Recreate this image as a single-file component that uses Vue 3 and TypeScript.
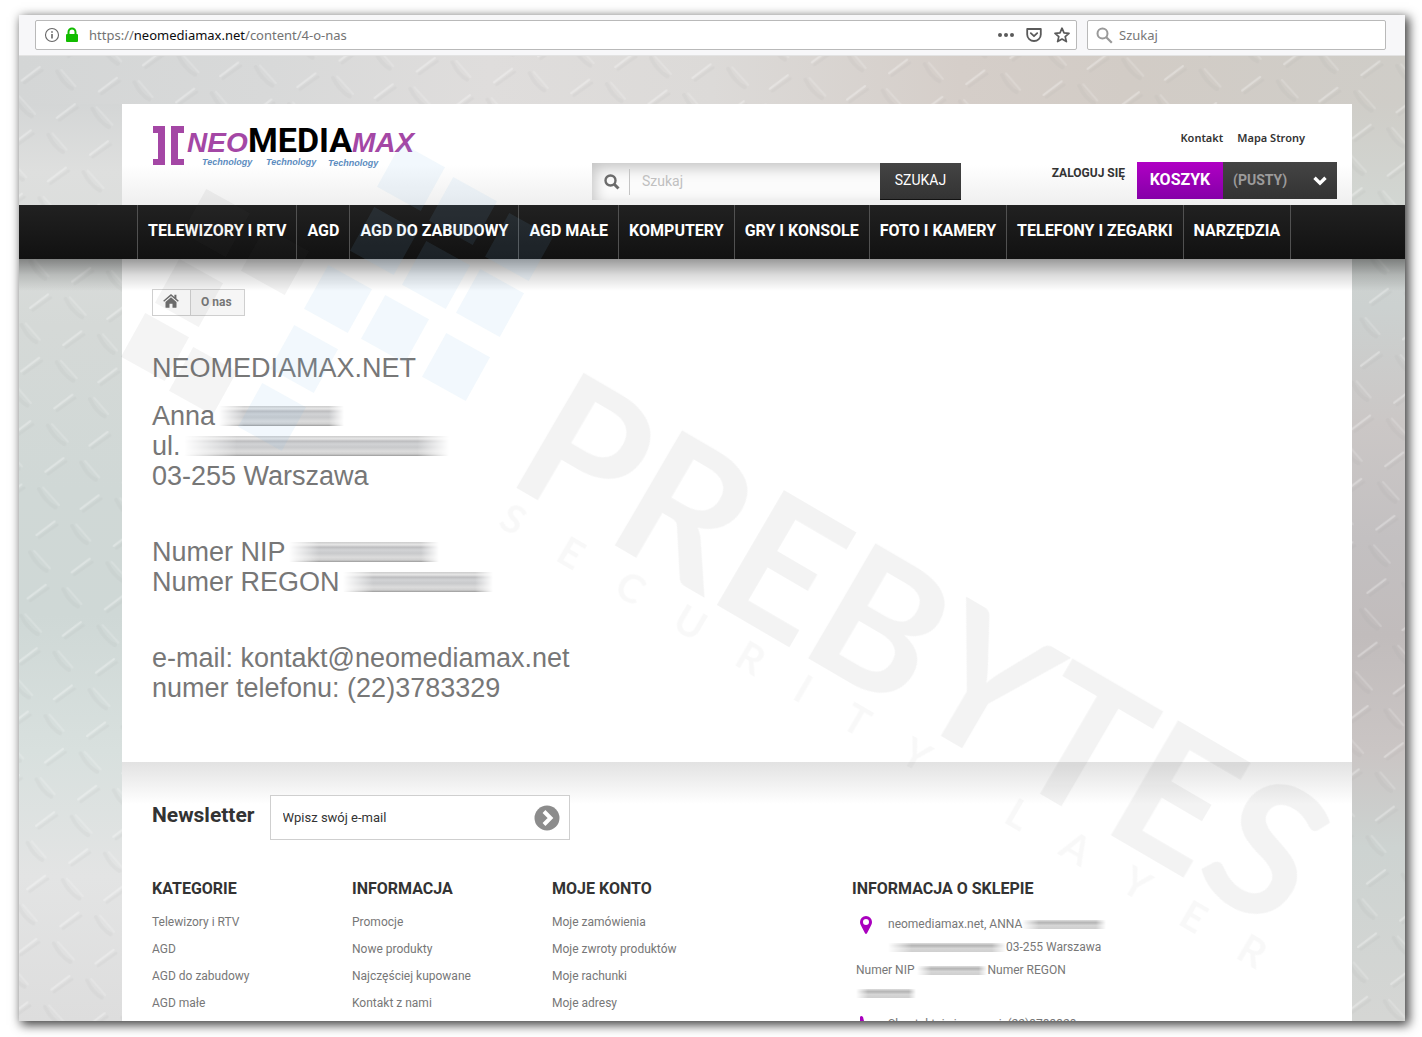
<script setup lang="ts">
interface LinkColumn {
  title: string
  links: string[]
}

const menu: string[] = [
  'TELEWIZORY I RTV',
  'AGD',
  'AGD DO ZABUDOWY',
  'AGD MAŁE',
  'KOMPUTERY',
  'GRY I KONSOLE',
  'FOTO I KAMERY',
  'TELEFONY I ZEGARKI',
  'NARZĘDZIA',
]

const columns: LinkColumn[] = [
  { title: 'KATEGORIE', links: ['Telewizory i RTV', 'AGD', 'AGD do zabudowy', 'AGD małe'] },
  { title: 'INFORMACJA', links: ['Promocje', 'Nowe produkty', 'Najczęściej kupowane', 'Kontakt z nami'] },
  { title: 'MOJE KONTO', links: ['Moje zamówienia', 'Moje zwroty produktów', 'Moje rachunki', 'Moje adresy'] },
]

// Centres of the tilted tiles in the watermark emblem
const blueTiles: [number, number][] = [
  [392, 162], [444, 196], [365, 226], [417, 260], [500, 232],
  [319, 284], [376, 314], [471, 288], [437, 352], [285, 344], [253, 402],
]
const greyTiles: [number, number][] = [
  [197, 208], [170, 278], [256, 246], [136, 332], [184, 366],
]
</script>

<template>
  <div class="desk">
    <div class="window">
      <div class="toolbar">
        <div class="address">
          <svg width="16" height="16" viewBox="0 0 16 16" aria-hidden="true">
            <circle cx="8" cy="8" r="6.5" fill="none" stroke="#666" stroke-width="1.1" />
            <path d="M7.2 7h1.6v4.6H7.2zM7.2 4.2h1.6v1.6H7.2z" fill="#666" />
          </svg>
          <svg class="lock" width="14" height="16" viewBox="0 0 14 16" aria-hidden="true">
            <path d="M3.5 8V5a3.5 3.5 0 0 1 7 0v3" fill="none" stroke="#12bc00" stroke-width="2" />
            <rect x="1" y="7" width="12" height="8" rx="1" fill="#12bc00" />
          </svg>
          <span class="url">https://<b>neomediamax.net</b>/content/4-o-nas</span>
          <span class="actions">
            <svg width="16" height="16" viewBox="0 0 16 16" fill="#5a5a5a" aria-hidden="true">
              <circle cx="2" cy="8" r="2" /><circle cx="8" cy="8" r="2" /><circle cx="14" cy="8" r="2" />
            </svg>
            <svg width="16" height="16" viewBox="0 0 16 16" fill="none" stroke="#5a5a5a" stroke-width="1.8" stroke-linecap="round" stroke-linejoin="round" aria-hidden="true">
              <path d="M1.2 2h13.6v5.4a6.8 6.6 0 0 1-13.6 0z" /><path d="M4.8 6.2 8 9.2l3.200-3" />
            </svg>
            <svg width="16" height="16" viewBox="0 0 16 16" fill="none" stroke="#5a5a5a" stroke-width="1.7" stroke-linejoin="round" aria-hidden="true">
              <path d="m8 1.200 2 4.600 5 .5-3.800 3.300 1.200 5L8 12l-4.400 2.600 1.200-5L1 6.300l5-.5z" />
            </svg>
          </span>
        </div>
        <label class="finder">
          <svg width="17" height="17" viewBox="0 0 17 17" fill="none" stroke="#999" aria-hidden="true">
            <circle cx="6.500" cy="6.500" r="5" stroke-width="2" /><path d="m10.300 10.300 5.500 5.500" stroke-width="2.200" />
          </svg>
          <input type="search" placeholder="Szukaj" aria-label="Szukaj w sieci" />
        </label>
      </div>

      <div class="site">
        <svg class="texture" width="100%" height="100%" aria-hidden="true">
          <defs>
            <pattern id="tread" width="78" height="64" patternUnits="userSpaceOnUse" patternTransform="rotate(8)">
              <g fill="none" stroke-linecap="round">
                <path d="M6 24 22 8M46 56 62 40" stroke="#fff" stroke-width="2" opacity=".3" />
                <path d="M9 26 25 11M49 58 65 43" stroke="#8b908e" stroke-width="3" opacity=".07" />
                <path d="M44 8 60 22M6 40 24 55" stroke="#fff" stroke-width="2" opacity=".17" />
                <path d="M40 10q8 12 17 15M2 42q8 12 19 16" stroke="#8b908e" stroke-width="4" opacity=".07" />
              </g>
            </pattern>
          </defs>
          <rect width="100%" height="100%" fill="url(#tread)" />
        </svg>

        <header class="sheet header">
          <a class="logo" href="#" aria-label="NeoMediaMax">
            <svg width="270" height="54" viewBox="0 0 270 54">
              <path d="M1 9h12v39H1v-6h5V16H1zM19 9h13v7h-6v26h6v6H19z" fill="#a447a5" />
              <g class="brand">
                <text x="35" y="35" class="slant">NEO</text>
                <text x="96" y="35" class="block">MEDIA</text>
                <text x="200" y="35" class="slant">MAX</text>
              </g>
              <g class="tag">
                <text x="50" y="48">Technology</text>
                <text x="114" y="48">Technology</text>
                <text x="176" y="49">Technology</text>
              </g>
            </svg>
          </a>
          <form class="search" @submit.prevent>
            <svg width="16" height="16" viewBox="0 0 16 16" fill="none" stroke="#6b6b6b" aria-hidden="true">
              <circle cx="6.500" cy="6.500" r="5" stroke-width="2.400" /><path d="m10.500 10.500 4 4" stroke-width="3" />
            </svg>
            <input type="text" placeholder="Szukaj" aria-label="Szukaj w sklepie" />
            <button type="submit">SZUKAJ</button>
          </form>
          <div class="account">
            <div class="toplinks"><a href="#">Kontakt</a><a href="#">Mapa Strony</a></div>
            <div class="userbar">
              <a class="login" href="#">ZALOGUJ SIĘ</a>
              <a class="cart" href="#">
                <span class="cart-name">KOSZYK</span>
                <span class="cart-state">(PUSTY)
                  <svg width="14" height="10" viewBox="0 0 14 10" fill="none" stroke="#fff" stroke-width="3.400" aria-hidden="true"><path d="m1.500 1.800 5.500 5.400 5.500-5.400" /></svg>
                </span>
              </a>
            </div>
          </div>
        </header>

        <nav class="menu">
          <a v-for="item in menu" :key="item" href="#">{{ item }}</a>
        </nav>

        <main class="sheet content">
          <div class="crumbs">
            <a href="#" aria-label="Strona główna">
              <svg width="16" height="14" viewBox="0 0 16 14" fill="#6d6d6d" aria-hidden="true">
                <path d="M8 3.200 13.500 8v5.200a.6.600 0 0 1-.6.600H9.500V9.800h-3v4H3.100a.6.600 0 0 1-.6-.6V8z" />
                <path d="M8 0 .2 6.700l.9 1L8 1.900l6.900 5.800.9-1L13.400 4.600V.8h-2v2.100z" />
              </svg>
            </a>
            <span>O nas</span>
          </div>
          <div class="about">
            <p>NEOMEDIAMAX.NET</p>
            <p>Anna <i class="hidden w125"></i><br />ul. <i class="hidden w265"></i><br />03-255 Warszawa</p>
            <p>Numer NIP <i class="hidden w150"></i><br />Numer REGON <i class="hidden w150"></i></p>
            <p>e-mail: kontakt@neomediamax.net<br />numer telefonu: (22)3783329</p>
          </div>
        </main>

        <footer class="sheet footer">
          <form class="newsletter" @submit.prevent>
            <label for="newsletter">Newsletter</label>
            <div class="mailbox">
              <input id="newsletter" type="text" value="Wpisz swój e-mail" />
              <button type="submit" aria-label="Zapisz się">
                <svg width="26" height="26" viewBox="0 0 26 26" aria-hidden="true">
                  <circle cx="13" cy="13" r="12.500" fill="#8c8c8c" />
                  <path d="m10 6.500 6.500 6.500-6.500 6.500" fill="none" stroke="#fff" stroke-width="4" />
                </svg>
              </button>
            </div>
          </form>
          <div class="columns">
            <section v-for="column in columns" :key="column.title">
              <h4>{{ column.title }}</h4>
              <ul>
                <li v-for="link in column.links" :key="link"><a href="#">{{ link }}</a></li>
              </ul>
            </section>
            <section class="store">
              <h4>INFORMACJA O SKLEPIE</h4>
              <div class="entry">
                <svg width="12" height="18" viewBox="0 0 12 18" aria-hidden="true">
                  <path fill-rule="evenodd" d="M6 0a6 6 0 0 1 6 6c0 2-1 3.500-2 5.500L7 17.200q-1 1.400-2 0L2 11.500C1 9.500 0 8 0 6a6 6 0 0 1 6-6zm0 3a3 3 0 1 0 0 6 3 3 0 0 0 0-6z" fill="#a900be" />
                </svg>
                <span>neomediamax.net, ANNA<i class="hidden small w84"></i><br /><i class="hidden small w118"></i>03-255 Warszawa</span>
              </div>
              <p>Numer NIP <i class="hidden small w70"></i>Numer REGON<br /><i class="hidden small w60"></i></p>
              <div class="entry">
                <svg width="12" height="18" viewBox="0 0 12 18" aria-hidden="true">
                  <path d="M0 1q1-2 3 0l1 4-2 2q2 4 5 6l2-1 2 2q1 2-1 3-4 1-8-5T0 1z" fill="#a900be" />
                </svg>
                <span>Skontaktuj się z nami: (22)3783329</span>
              </div>
            </section>
          </div>
        </footer>
      </div>

      <svg class="watermark" viewBox="0 0 1386 1006" preserveAspectRatio="xMinYMin meet" aria-hidden="true">
        <g fill="#7fbbe4" opacity=".1">
          <rect v-for="([x, y], i) in blueTiles" :key="i" x="-25" y="-25" width="50" height="50" :transform="`translate(${x} ${y}) rotate(29)`" />
        </g>
        <g fill="#555" opacity=".065">
          <rect v-for="([x, y], i) in greyTiles" :key="i" x="-25" y="-25" width="50" height="50" :transform="`translate(${x} ${y}) rotate(29)`" />
        </g>
        <g fill="#555" opacity=".068" transform="translate(498 472) rotate(30.300)">
          <text class="mark-big" x="-15" y="1">PREBYTES</text>
          <text class="mark-small" x="13 80 149 218 288 349 411 480 598 665 735 801 869" y="44">SECURITYLAYER</text>
        </g>
      </svg>
    </div>
  </div>
</template>

<style>
body {
  margin: 0;
  background: #fff;
}
</style>

<style scoped>
* {
  box-sizing: border-box;
}
.desk {
  height: 100vh;
  padding: 15px 17px 16px 19px;
  overflow: hidden;
  font-family: Roboto, "Liberation Sans", sans-serif;
  font-size: 12px;
  color: #777;
}
a {
  color: inherit;
  text-decoration: none;
}
.window {
  position: relative;
  display: flex;
  flex-direction: column;
  height: 100%;
  box-shadow: 3px 3px 10px 1px rgba(0, 0, 0, 0.75);
}
.toolbar {
  display: flex;
  flex: none;
  gap: 10px;
  height: 41px;
  padding: 5px 19px 5px 16px;
  background: #f7f7f9;
  border-bottom: 1px solid #e3e3e3;
  font-family: "Noto Sans", "Open Sans", sans-serif;
  font-size: 13px;
}
.address,
.finder {
  display: flex;
  align-items: center;
  height: 30px;
  background: #fff;
  border: 1px solid #b9b9b9;
  border-radius: 2px;
}
.address {
  flex: 1;
  padding: 0 6px 0 8px;
}
.lock {
  margin-left: 5px;
}
.url {
  margin-left: 10px;
  color: #737373;
}
.url b {
  font-weight: 400;
  color: #0c0c0d;
}
.actions {
  display: flex;
  gap: 12px;
  margin-left: auto;
}
.finder {
  width: 299px;
  padding: 0 8px;
  gap: 6px;
}
.finder input {
  flex: 1;
  min-width: 0;
  padding: 0;
  border: 0;
  outline: 0;
  background: none;
  font: inherit;
}
.finder input::placeholder {
  color: #777;
}
.site {
  position: relative;
  flex: 1;
  min-height: 0;
  padding-top: 48px;
  overflow: hidden;
  background:
    linear-gradient(90deg, #d4d6d6 0%, #d8d9d9 18%, #dfdddc 34%, #dcdad8 50%, #d5cec9 68%, #d2ccc6 80%, #cfcdc8 100%) top / 100% 48px no-repeat,
    linear-gradient(180deg, #cfcdc8 0%, #cfcdc8 5%, #d2d6d2 15%, #ccd1d0 26%, #cbc7c6 38%, #c3c0c1 50%, #c1bcbc 60%, #cac5c4 72%, #cdd3d1 82%, #d5d6d4 100%) right / 50% 100% no-repeat,
    linear-gradient(180deg, #d4d6d6 0%, #d4d6d6 5%, #dedfde 12%, #d5d9d7 28%, #d0d8d6 45%, #cfd8d6 58%, #d8e0de 72%, #e3e4e4 85%, #dddddd 100%);
}
.texture {
  position: absolute;
  inset: 0;
}
.sheet {
  position: relative;
  margin: 0 53px 0 103px;
  background: #fff;
}
.header {
  display: grid;
  grid-template-columns: 440px 369px 1fr;
  height: 101px;
  padding: 0 15px 0 30px;
  background: linear-gradient(#fff 60%, #efefef);
}
.logo {
  padding-top: 13px;
}
.brand {
  font-family: "Liberation Sans", Arial, sans-serif;
  font-weight: 700;
}
.slant {
  font-size: 28px;
  font-style: italic;
  fill: #a447a5;
}
.block {
  font-family: Roboto, sans-serif;
  font-size: 34px;
  fill: #000;
}
.tag {
  font: italic 700 9px "Liberation Sans", Arial, sans-serif;
  fill: #5c8cc0;
}
.search {
  display: flex;
  align-self: end;
  align-items: center;
  height: 37px;
  margin-bottom: 5px;
  padding-left: 12px;
  background: #fbfbfb;
  box-shadow: inset 3px 5px 14px rgba(0, 0, 0, 0.22);
}
.search input {
  flex: 1;
  min-width: 0;
  height: 26px;
  margin-left: 9px;
  padding: 0 12px 2px;
  border: 0;
  border-left: 1px solid #c4c4c4;
  outline: 0;
  background: none;
  font: 14px Roboto, sans-serif;
}
.search input::placeholder {
  color: #c0c0c0;
}
.search button {
  width: 81px;
  height: 37px;
  padding: 0 0 2px;
  border: 0;
  border-bottom: 1px solid #111;
  background: linear-gradient(#444, #333);
  color: #fff;
  font: 14px Roboto, sans-serif;
}
.account {
  display: flex;
  flex-direction: column;
  justify-content: space-between;
  align-items: flex-end;
  padding: 27px 0 6px;
  color: #333;
  font-weight: 700;
}
.toplinks {
  display: flex;
  gap: 14px;
  padding-right: 32px;
  font-size: 11px;
  line-height: 14px;
  font-family: "Noto Sans", sans-serif;
  font-weight: 600;
}
.userbar {
  display: flex;
  gap: 12px;
}
.login {
  padding-top: 4px;
  line-height: 14px;
}
.cart {
  display: flex;
  width: 200px;
  height: 37px;
  line-height: 35px;
}
.cart-name {
  width: 86px;
  background: linear-gradient(#b000c4, #8500a8);
  color: #fff;
  font-size: 16px;
  text-align: center;
}
.cart-state {
  display: flex;
  flex: 1;
  align-items: center;
  justify-content: space-between;
  padding: 0 10px;
  background: linear-gradient(#444, #333);
  color: #9c9b9b;
  font-size: 14px;
}
.menu {
  position: relative;
  z-index: 1;
  display: flex;
  height: 54px;
  padding-left: 118px;
  background: linear-gradient(#212121, #111);
  white-space: nowrap;
}
.menu::after {
  content: "";
  position: absolute;
  top: 100%;
  left: 0;
  right: 0;
  height: 32px;
  background: linear-gradient(rgba(0, 0, 0, 0.4), rgba(0, 0, 0, 0.14) 50%, transparent);
}
.menu a {
  padding: 0 10px;
  border-left: 1px solid #515151;
  color: #fff;
  font-size: 16px;
  font-weight: 700;
  line-height: 51px;
}
.menu a:last-child {
  border-right: 1px solid #515151;
}
.content {
  padding: 30px 30px 59px;
}
.crumbs {
  position: relative;
  z-index: 2;
  display: inline-flex;
  height: 27px;
  border: 1px solid #cfcfcf;
  font-weight: 700;
  line-height: 24px;
}
.crumbs a {
  padding: 4px 11px 0 10px;
  border-right: 1px solid #cfcfcf;
  line-height: 14px;
}
.crumbs span {
  padding: 0 12px 0 10px;
  background: #f6f6f6;
}
.about {
  padding-top: 37px;
  font: 27px/30px "Liberation Sans", Arial, sans-serif;
}
.about p {
  margin: 0 0 46px;
}
.about p:first-child {
  margin-bottom: 18px;
}
.about p:last-child {
  margin-bottom: 0;
}
.hidden {
  display: inline-block;
  height: 20px;
  margin-left: -4px;
  vertical-align: -1px;
  background: linear-gradient(#ccc, #e6e6e6 14%, #bdbdbf 26%, #d2d3d5 40%, #c8c9cb 56%, #dcdcdc 76%, #cfcfcf 90%, #999);
  -webkit-mask-image: linear-gradient(90deg, transparent, #000 20%, #000 88%, transparent);
  mask-image: linear-gradient(90deg, transparent, #000 20%, #000 88%, transparent);
}
.small {
  height: 9px;
  margin-left: 0;
  background: linear-gradient(#ddd, #b4b4b4 30%, #d6d6d6 60%, #cfcfcf);
}
.w60 { width: 60px; }
.w70 { width: 70px; }
.w84 { width: 84px; }
.w118 { width: 118px; }
.w125 { width: 125px; }
.w150 { width: 150px; }
.w265 { width: 265px; }
.footer {
  padding: 33px 30px 100px;
  background: linear-gradient(#e2e2e2, #fff 42px);
}
.newsletter {
  display: flex;
  gap: 15px;
  color: #333;
}
.newsletter label {
  font-size: 21px;
  font-weight: 700;
  line-height: 40px;
}
.mailbox {
  display: flex;
  align-items: center;
  width: 300px;
  height: 45px;
  padding: 0 9px 0 12px;
  border: 1px solid #cfcfcf;
  background: #fff;
}
.mailbox input {
  flex: 1;
  min-width: 0;
  padding: 0;
  border: 0;
  outline: 0;
  background: none;
  color: #333;
  font: 13px Roboto, sans-serif;
}
.mailbox button {
  height: 26px;
  padding: 0;
  border: 0;
  background: none;
}
.columns {
  display: grid;
  grid-template-columns: 200px 200px 300px 1fr;
  margin-top: 39px;
}
.columns h4 {
  margin: 0 0 10px;
  color: #333;
  font-size: 16px;
  font-weight: 700;
  line-height: 20px;
}
.columns ul {
  margin: 0;
  padding: 0;
  list-style: none;
}
.columns li {
  height: 27px;
  line-height: 27px;
}
.store {
  line-height: 23px;
}
.entry {
  display: flex;
  gap: 16px;
  padding: 4px 0 0 8px;
}
.entry svg {
  flex: none;
  margin-top: 3px;
}
.store .entry + p {
  margin: 0 0 4px;
  padding-left: 4px;
}
.watermark {
  position: absolute;
  z-index: 3;
  top: 0;
  left: 0;
  width: 100%;
  height: 100%;
  pointer-events: none;
}
.mark-big {
  font: 700 184px Lato, sans-serif;
  font-kerning: none;
}
.mark-small {
  font: 700 40px Lato, sans-serif;
  text-anchor: middle;
  opacity: 0.5;
}
</style>
